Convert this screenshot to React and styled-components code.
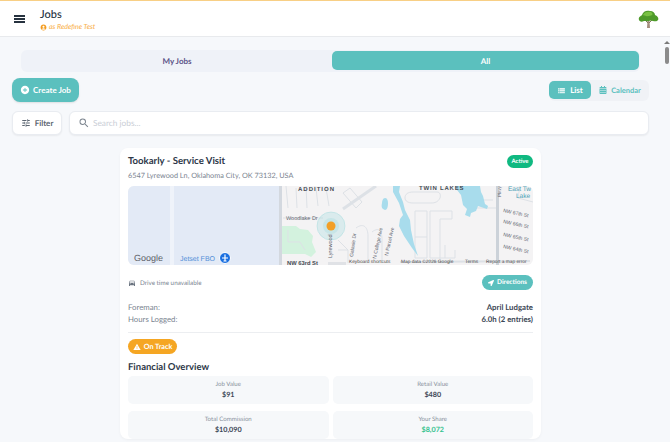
import React from "react";
import styled, { createGlobalStyle } from "styled-components";
import { MdAccountCircle, MdAddCircle, MdDirectionsCar, MdWarning, MdTune, MdSearch, MdViewList } from "react-icons/md";
import { FaCalendarAlt, FaLocationArrow } from "react-icons/fa";

const Global = createGlobalStyle`
  html, body { margin: 0; padding: 0; height: 442px; overflow: hidden; }
  body { font-family: Lato, "Noto Sans", sans-serif; color: #2d3748; text-rendering: geometricPrecision; }
  * { box-sizing: border-box; }
`;
const TEAL = "#5bc0be";

const Page = styled.div`height: 442px; display: flex; flex-direction: column; background: #f6f8fb; overflow: hidden;`;
const Header = styled.header`
  height: 37px; flex: none; display: flex; align-items: center; background: #fff;
  border-top: 1px solid #f8cf85; border-bottom: 1px solid #e8eaed; padding: 0 11px 0 14px;
`;
const Burger = styled.svg`width: 26px; height: 8px; flex: none; margin-top: 1px; color: #26323f;`;
const TitleBlock = styled.div`flex: 1; display: flex; flex-direction: column; gap: 2px; margin-top: 3px;`;
const Title = styled.div`font-size: 11px; font-weight: 500; line-height: 13px; color: #26323f;`;
const Sub = styled.div`display: flex; align-items: center; gap: 2px; font-size: 7px; line-height: 9px; font-style: italic; font-weight: 500; color: #f9b250; svg { color: #f39c1f; font-size: 7px; }`;
const Body = styled.div`flex: 1; min-height: 0; display: flex; overflow: hidden;`;
const Main = styled.main`flex: 1; min-width: 0; padding: 13px 12px 0 12px; overflow: hidden; display: flex; flex-direction: column;`;
const ScrollBar = styled.div`width: 7px; flex: none; display: flex; flex-direction: column; align-items: center; padding-top: 4px; gap: 3px;`;
const ScrollUp = styled.span`width: 0; height: 0; border: 3px solid transparent; border-top: 0; border-bottom: 3px solid #7a7a7a;`;
const Thumb = styled.span`width: 4px; height: 17px; border-radius: 2px; background: #8b8b8b;`;

const Tabs = styled.div`margin: 0 0 0 9px; width: 619px; height: 22px; display: flex; align-items: stretch; background: #eff2f8; border-radius: 6px; padding: 1px 1px 2px;`;
const Tab = styled.div`
  width: ${p => p.$active ? "307px" : "310px"}; display: flex; align-items: center; justify-content: center; font-size: 8px; font-weight: 700; border-radius: 5px;
  color: ${p => p.$active ? "#fff" : "#5d5489"}; background: ${p => p.$active ? TEAL : "transparent"};
`;
const ActionRow = styled.div`display: flex; justify-content: space-between; align-items: center; margin-top: 6px; width: 637px;`;
const CreateBtn = styled.button`
  width: 67px; height: 24px; border: 0; border-radius: 8px; background: ${TEAL}; color: #fff; font: 700 8px Lato, sans-serif;
  display: flex; align-items: center; justify-content: center; gap: 3px; box-shadow: 0 1px 2px rgba(0,0,0,.1); padding: 0;
  svg { font-size: 10px; }
`;
const Toggle = styled.div`width: 100px; height: 21px; border-radius: 6px; background: #f0f2f6; display: flex; align-items: center;`;
const ToggleBtn = styled.div`
  height: 18px; border-radius: 5px; display: flex; align-items: center; justify-content: center; gap: 4px; font-size: ${p => p.$active ? "8px" : "7.5px"}; font-weight: 700;
  width: ${p => p.$active ? "42px" : "58px"}; background: ${p => p.$active ? TEAL : "transparent"}; color: ${p => p.$active ? "#fff" : TEAL};
  svg { font-size: ${p => p.$active ? "9px" : "8px"}; opacity: ${p => p.$active ? ".8" : "1"}; }
`;
const SearchRow = styled.div`display: flex; gap: 7px; margin-top: 9px; width: 637px;`;
const FilterBtn = styled.div`
  width: 50px; height: 24px; background: #fff; border: 1px solid #e9ecf1; border-radius: 6px; display: flex; align-items: center; justify-content: center; gap: 4px;
  font-size: 8px; font-weight: 700; color: #5c6672; box-shadow: 0 1px 2px rgba(0,0,0,.06); svg { font-size: 10px; }
`;
const SearchBox = styled.div`
  flex: 1; height: 24px; background: #fff; border: 1px solid #e9ecf1; border-radius: 6px; display: flex; align-items: center; gap: 3px; padding-left: 8px;
  font-size: 8.3px; color: #c9ced6; box-shadow: 0 1px 2px rgba(0,0,0,.06); svg { font-size: 12px; color: #7d8690; }
`;
const Card = styled.section`
  margin: 13px 0 0 108px; width: 421px; flex: none; background: #fff; border-radius: 8px; padding: 7px 8px 0; box-shadow: 0 1px 3px rgba(0,0,0,.04);
`;
const CardHead = styled.div`display: flex; justify-content: space-between; align-items: flex-start;`;
const JobTitle = styled.h2`margin: 0; font-size: 9.6px; font-weight: 700; line-height: 14px; color: #2d3748;`;
const Address = styled.div`font-size: 7.3px; line-height: 11px; color: #7a8490; margin-top: 1px;`;
const Badge = styled.span`background: #10b981; color: #fff; font-size: 6px; font-weight: 700; border-radius: 7px; height: 13px; width: 26px; display: flex; align-items: center; justify-content: center;`;
const MapFrame = styled.div`height: 79px; margin-top: 5px; border-radius: 6px; overflow: hidden; svg { display: block; }`;
const DriveRow = styled.div`display: flex; justify-content: space-between; align-items: center; margin-top: 10px;`;
const DriveText = styled.div`display: flex; align-items: center; gap: 4px; padding-top: 1px; font-size: 6.3px; color: #7a8490; svg { font-size: 8px; color: #6b7480; }`;
const Directions = styled.div`height: 15px; width: 51px; border-radius: 8px; background: ${TEAL}; color: #fff; font-size: 6.5px; font-weight: 700; display: flex; align-items: center; justify-content: center; gap: 3px; svg { font-size: 6px; }`;
const Info = styled.div`display: flex; justify-content: space-between; font-size: 7.8px; line-height: 12px; color: #7a8490;`;
const InfoValue = styled.span`font-weight: 700; color: #3d4756;`;
const InfoBlock = styled.div`margin-top: 11px; padding-bottom: 7px; border-bottom: 1px solid #eceef1;`;
const Pill = styled.div`width: 49px; height: 15px; margin-top: 6px; border-radius: 8px; background: #f5a623; color: #fff; font-size: 7.2px; font-weight: 700; display: flex; align-items: center; justify-content: center; gap: 3px; svg { font-size: 8px; }`;
const SectionTitle = styled.h3`margin: 8px 0 0; font-size: 9.5px; line-height: 12px; font-weight: 700; color: #2d3748;`;
const Grid = styled.div`display: grid; grid-template-columns: 1fr 1fr; gap: 7px 4px; margin-top: 2px;`;
const Tile = styled.div`height: 28px; background: #f6f8fa; border-radius: 5px; display: flex; flex-direction: column; align-items: center; justify-content: center;`;
const TileLabel = styled.div`font-size: 6.1px; line-height: 9px; color: #8a939e;`;
const TileValue = styled.div`font-size: 7.2px; line-height: 12px; font-weight: 700; color: ${p => p.$green ? "#34c38f" : "#3d4756"};`;

const Tree = () => (
  <svg width="21" height="20" viewBox="0 0 21 20">
    <path d="M9.5 12 L9 19 L12 19 L11.5 12Z" fill="#a58f7e" />
    <path d="M7 11l3 3M14 11l-3 3" stroke="#8a7462" strokeWidth="1" />
    <path d="M1 11 C0 8 3 7 4 6 C5 2 9 1 12 2 C15 2 17 4 17 6 C20 7 21 10 20 11 C19 13 15 12 13 11.5 C10 12.5 8 12 6 12 C4 13 2 13 1 11Z" fill="#4e9a2a" />
    <path d="M5 6 C6 3 10 2 13 3 C15 4 15 6 13 6.5 C10 7.5 7 7.5 5 6Z" fill="#79c143" />
  </svg>
);

const T = styled.text`font-family: "Liberation Sans", sans-serif;`;
const MapArt = () => (
  <svg width="405" height="79" viewBox="128 186 405 79">
    <rect x="128" y="186" width="405" height="79" fill="#f4f3f4" />
    <rect x="128" y="186" width="151" height="79" fill="#e3eaf6" />
    <rect x="170" y="186" width="4" height="79" fill="#eff3fa" />
    <rect x="279" y="186" width="3" height="79" fill="#d3d8df" />
    <path d="M282 226h14l4 3 8 1 5 6-1 6 4 10-5 5-6-3h-23z" fill="#d3f2de" />
    <g fill="none" stroke="#dde1e6" strokeWidth="1">
      <path d="M286 186l2 22M296 188l1 20M306 186l1 22M316 188l2 18M326 188l3 18" />
      <path d="M283 218h40M288 230v12h12l5 8" />
      <path d="M338 240l10 10v13M338 250h10" />
      <path d="M343 209l33-23" strokeWidth="3" />
      <path d="M343 193l7-5 12 14-6 6z" />
      <path d="M356 228c8-6 12 0 12 8v24M372 232c8-6 10 0 10 8v20" />
      <path d="M405 198c0-4 3-6 8-6h24c3 0 4 3 3 6-2 4-5 5-9 5h-18c-5 0-8-2-8-5z" />
      <path d="M415 211h12v47h-12zM415 237h12M430 211h22v8h-12v40M430 211v47h25v-8M445 245v13" />
      <path d="M463 200h30M473 186v22h24M520 186l-2 12 15 4" />
      <path d="M400 262l130-1" strokeWidth="2" />
    </g>
    <path d="M393 186h7l-1 6 4 10 2 8 5 10 1 10 3 14 4 12-6-8-8-12-5-10 1-7 3-4-4-12-6-11z" fill="#a8dcec" />
    <path d="M385 198c2 0 3 2 3 5 0 4-1 7-3 7-3-1-4-3-3-7 0-2 1-5 3-5z" fill="#a8dcec" />
    <path d="M455 186h25l1 6 2 4 2 8 3 2-1 3-6-2-3-1-2 5-5 2-1 4-5-2 2-6-4-4-2-10-4-5z" fill="#a8dcec" />
    <rect x="496" y="186" width="3" height="79" fill="#ccd2d9" />
    <rect x="328" y="262" width="18" height="3" fill="#e0e2e6" />
    <circle cx="331" cy="226" r="14" fill="#a9dcdf" fillOpacity=".35" stroke="#a9dcdf" strokeWidth=".5" />
    <circle cx="331" cy="226" r="8" fill="#a9dcdf" fillOpacity=".4" />
    <circle cx="331" cy="226" r="4.5" fill="#f29f26" />
    <g fill="#5f6670" fontSize="6">
      <T x="286" y="220" fontSize="5.5">Woodlake Dr</T>
      <T x="298" y="191" fontSize="6" fontWeight="700" letterSpacing="1" fill="#474d55">ADDITION</T>
      <T x="419" y="190" fontSize="6" fontWeight="700" letterSpacing=".8" fill="#474d55">TWIN LAKES</T>
      <T x="287" y="264.5" fontSize="5.8" fontWeight="700" fill="#474d55">NW 63rd St</T>
      <T transform="translate(332 258) rotate(-90)" fontSize="5.5">Lyrewood</T>
      <T transform="translate(353 257) rotate(-82)" fontSize="5">Galaxie Dr</T>
      <T transform="translate(376 259) rotate(-78)" fontSize="5">N College Ave</T>
      <T transform="translate(388 256) rotate(-78)" fontSize="5">N Parcel Ave</T>
      <T transform="translate(501 197) rotate(-90)" fontSize="4.5">Pkwy</T>
      <T x="508" y="191" fontSize="6.5" fill="#4d9eb5">East Tw</T>
      <T x="516" y="198" fontSize="6.5" fill="#4d9eb5">Lake</T>
      <T transform="translate(503 212) rotate(12)" fontSize="5">NW 67th St</T>
      <T transform="translate(503 223) rotate(12)" fontSize="5">NW 66th St</T>
      <T transform="translate(503 236) rotate(12)" fontSize="5">NW 65th St</T>
      <T transform="translate(503 248) rotate(12)" fontSize="5">NW 64th St</T>
    </g>
    <T x="134" y="261" fontSize="9" fill="#5c6066">Google</T>
    <T x="180" y="261" fontSize="7" fill="#5590d8">Jetset FBO</T>
    <circle cx="225" cy="258" r="5.5" fill="#1a6fe0" stroke="#fff" strokeWidth="1" />
    <path d="M225 254.5v7M222 258h6M223.5 261h3" stroke="#fff" strokeWidth="1.2" />
    <T x="349" y="263" fontSize="4.8" fill="#444">Keyboard shortcuts</T>
    <T x="401" y="263" fontSize="4.8" fill="#444">Map data ©2026 Google</T>
    <T x="465" y="263" fontSize="4.8" fill="#444">Terms</T>
    <T x="486" y="263" fontSize="4.8" fill="#444">Report a map error</T>
  </svg>
);

export default function App() {
  return (
    <Page>
      <Global />
      <Header>
        <Burger viewBox="0 0 26 8" fill="currentColor">
          <rect width="11" height="2" />
          <rect y="3" width="11" height="2" />
          <rect y="6" width="11" height="2" />
        </Burger>
        <TitleBlock>
          <Title>Jobs</Title>
          <Sub><MdAccountCircle />as Redefine Test</Sub>
        </TitleBlock>
        <Tree />
      </Header>
      <Body>
        <Main>
          <Tabs>
            <Tab>My Jobs</Tab>
            <Tab $active>All</Tab>
          </Tabs>
          <ActionRow>
            <CreateBtn><MdAddCircle />Create Job</CreateBtn>
            <Toggle>
              <ToggleBtn $active><MdViewList />List</ToggleBtn>
              <ToggleBtn><FaCalendarAlt />Calendar</ToggleBtn>
            </Toggle>
          </ActionRow>
          <SearchRow>
            <FilterBtn><MdTune />Filter</FilterBtn>
            <SearchBox><MdSearch />Search jobs...</SearchBox>
          </SearchRow>
          <Card>
            <CardHead>
              <JobTitle>Tookarly - Service Visit</JobTitle>
              <Badge>Active</Badge>
            </CardHead>
            <Address>6547 Lyrewood Ln, Oklahoma City, OK 73132, USA</Address>
            <MapFrame><MapArt /></MapFrame>
            <DriveRow>
              <DriveText><MdDirectionsCar />Drive time unavailable</DriveText>
              <Directions><FaLocationArrow />Directions</Directions>
            </DriveRow>
            <InfoBlock>
              <Info><span>Foreman:</span><InfoValue>April Ludgate</InfoValue></Info>
              <Info><span>Hours Logged:</span><InfoValue>6.0h (2 entries)</InfoValue></Info>
            </InfoBlock>
            <Pill><MdWarning />On Track</Pill>
            <SectionTitle>Financial Overview</SectionTitle>
            <Grid>
              <Tile><TileLabel>Job Value</TileLabel><TileValue>$91</TileValue></Tile>
              <Tile><TileLabel>Retail Value</TileLabel><TileValue>$480</TileValue></Tile>
              <Tile><TileLabel>Total Commission</TileLabel><TileValue>$10,090</TileValue></Tile>
              <Tile><TileLabel>Your Share</TileLabel><TileValue $green>$8,072</TileValue></Tile>
            </Grid>
          </Card>
        </Main>
        <ScrollBar><ScrollUp /><Thumb /></ScrollBar>
      </Body>
    </Page>
  );
}
